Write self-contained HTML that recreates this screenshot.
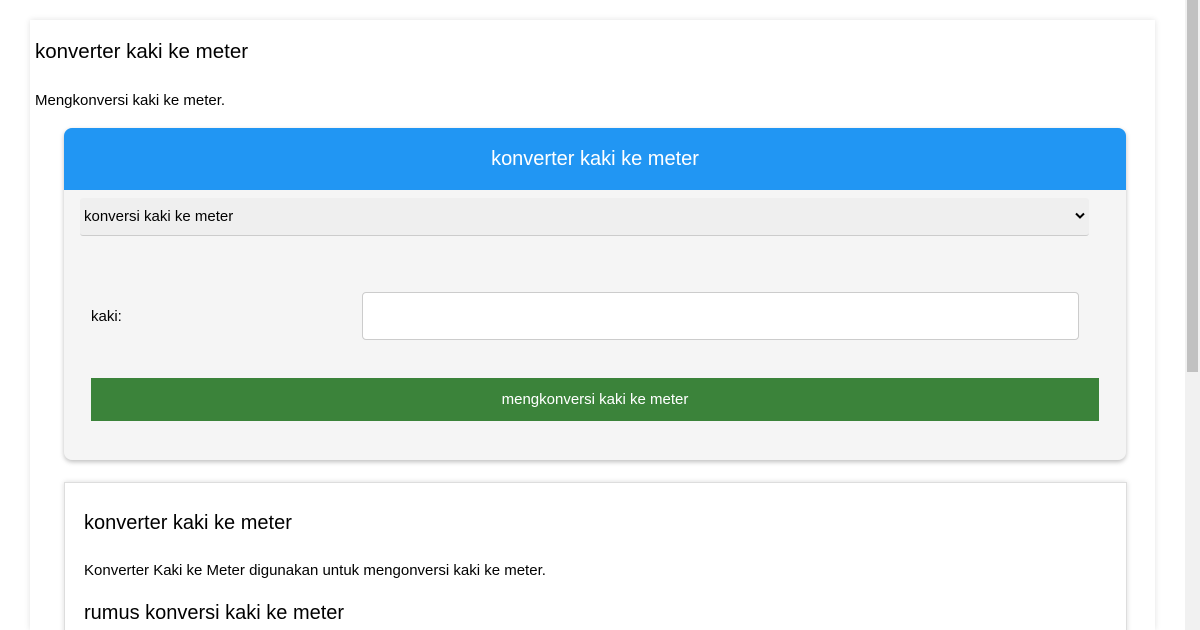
<!DOCTYPE html>
<html style="overflow:hidden;height:630px"><head><style>
html,body{margin:0;width:1200px;height:630px;overflow:hidden}
body{background:#fff;font-family:"Liberation Sans",sans-serif;position:relative;color:#000}
.a{position:absolute}
</style></head><body>
<div class="a" style="left:30px;top:20px;width:1125px;height:610px;background:#fff;box-shadow:0 0 6px rgba(0,0,0,.12)"></div>
<div class="a" style="left:35px;top:40px;font-size:20.5px">konverter kaki ke meter</div>
<div class="a" style="left:35px;top:92px;font-size:15px">Mengkonversi kaki ke meter.</div>
<div class="a" style="left:64px;top:128px;width:1062px;height:332px;background:#f5f5f5;border-radius:8px;box-shadow:0 2px 5px rgba(0,0,0,.25);overflow:hidden">
 <div style="height:62px;background:#2196f3;color:#fff;font-size:20px;text-align:center;line-height:63px">konverter kaki ke meter</div>
</div>
<div class="a" style="left:80px;top:198px;width:1009px;height:37px;background:#efefef;border-bottom:1px solid #ccc;border-radius:3px;font-size:15px;line-height:38px;text-indent:4px">konversi kaki ke meter
 <svg class="a" style="right:4px;top:14px" width="10" height="8" viewBox="0 0 10 8"><path d="M1 1.5L5 5.5L9 1.5" stroke="#000" stroke-width="2" fill="none"/></svg></div>
<div class="a" style="left:91px;top:308px;font-size:15px">kaki:</div>
<div class="a" style="left:362px;top:292px;width:715px;height:46px;background:#fff;border:1px solid #ccc;border-radius:4px"></div>
<div class="a" style="left:91px;top:378px;width:1008px;height:43px;background:#3b833a;color:#fff;font-size:15px;text-align:center;line-height:43px">mengkonversi kaki ke meter</div>
<div class="a" style="left:64px;top:482px;width:1061px;height:160px;background:#fff;border:1px solid #ddd;box-shadow:0 0 5px rgba(0,0,0,.15)"></div>
<div class="a" style="left:84px;top:512px;font-size:20px">konverter kaki ke meter</div>
<div class="a" style="left:84px;top:562px;font-size:15px">Konverter Kaki ke Meter digunakan untuk mengonversi kaki ke meter.</div>
<div class="a" style="left:84px;top:602px;font-size:20px">rumus konversi kaki ke meter</div>
<div class="a" style="left:1185px;top:0;width:15px;height:630px;background:#f1f1f1"></div>
<div class="a" style="left:1187px;top:0;width:11px;height:372px;background:#c1c1c1"></div>
</body></html>
